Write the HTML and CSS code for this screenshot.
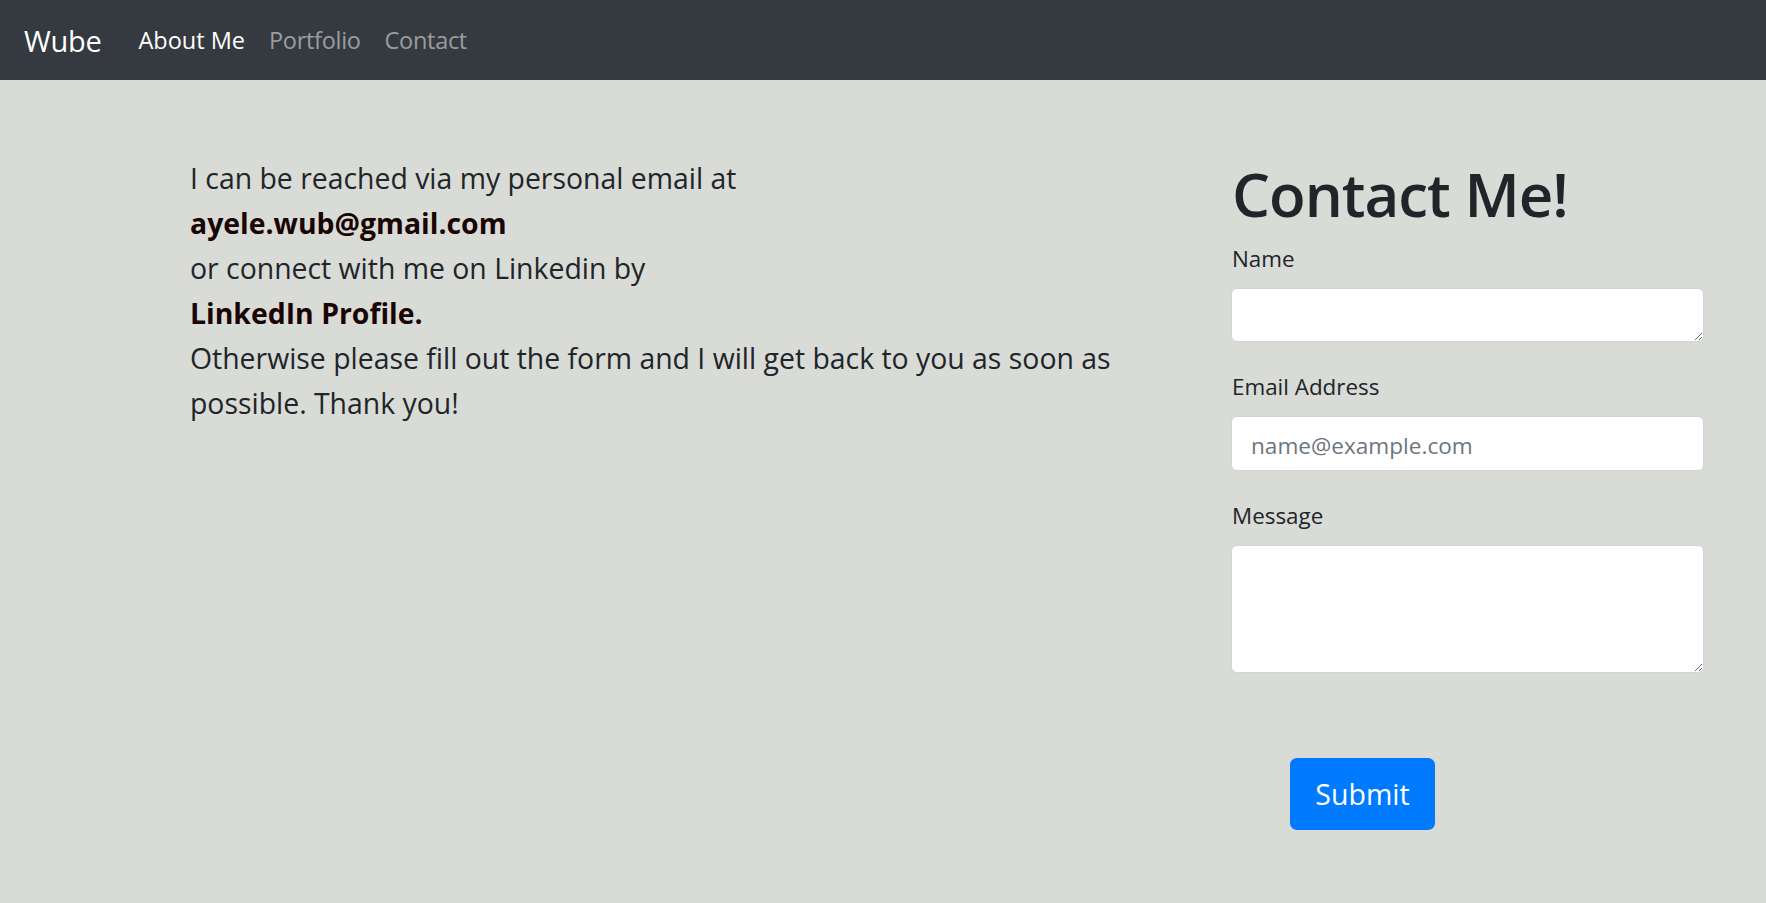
FILE: index.html
```html
<!DOCTYPE html>
<html lang="en">
<head>
<meta charset="utf-8">
<title>Contact - Wube</title>
<link rel="stylesheet" href="styles.css">
</head>
<body>
<nav class="navbar">
  <a class="brand" href="#">Wube</a>
  <ul class="nav">
    <li><a class="nav-link active" href="#">About Me</a></li>
    <li><a class="nav-link" href="#">Portfolio</a></li>
    <li><a class="nav-link" href="#">Contact</a></li>
  </ul>
</nav>
<main class="main">
  <section class="info">
    <p>I can be reached via my personal email at<br>
    <strong>ayele.wub@gmail.com</strong><br>
    or connect with me on Linkedin by<br>
    <strong>LinkedIn Profile.</strong><br>
    Otherwise please fill out the form and I will get back to you as soon as possible. Thank you!</p>
  </section>
  <section class="contact">
    <h1 class="title">Contact Me!</h1>
    <form class="form">
      <div class="group">
        <label class="label" for="name">Name</label>
        <textarea class="control name" id="name"></textarea>
      </div>
      <div class="group">
        <label class="label" for="email">Email Address</label>
        <input class="control email" id="email" type="email" placeholder="name@example.com">
      </div>
      <div class="group">
        <label class="label" for="msg">Message</label>
        <textarea class="control msg" id="msg"></textarea>
      </div>
      <button class="btn" type="button">Submit</button>
    </form>
  </section>
</main>
</body>
</html>
```
FILE: styles.css
```css
* { box-sizing: border-box; }
html, body { margin: 0; padding: 0; }
body {
  background: #d9dbd6;
  color: #212529;
  font-family: "Open Sans", "Noto Sans", sans-serif;
  min-height: 903px;
}
.navbar {
  height: 80px;
  background: #343a40;
  display: flex;
  align-items: center;
  padding: 0 24px;
}
.brand {
  color: #fff;
  text-decoration: none;
  font-size: 29px;
  margin-right: 37px;
  letter-spacing: -0.3px;
}
.nav {
  list-style: none;
  margin: 0;
  padding: 0;
  display: flex;
  gap: 24px;
}
.nav-link {
  color: rgba(255,255,255,0.5);
  text-decoration: none;
  font-size: 23.5px;
  letter-spacing: -0.3px;
}
.nav-link.active { color: #fff; letter-spacing: 0; }
.main {
  display: flex;
  padding-top: 76px;
}
.info {
  width: 1180px;
  padding-left: 190px;
  padding-right: 30px;
}
.info p {
  margin: 0;
  font-size: 28.4px;
  line-height: 45px;
}
.info strong { color: #1a0505; font-weight: 700; }
.contact {
  margin-left: auto;
  margin-right: 62px;
  width: 473px;
}
.title {
  margin: 0 0 10px 1px;
  font-size: 60px;
  font-weight: 560;
  line-height: 76px;
  letter-spacing: -1px;
}
.form { display: flex; flex-direction: column; }
.group { display: flex; flex-direction: column; margin-bottom: 28px; }
.label {
  font-size: 22.4px;
  line-height: 34px;
  margin: 0 0 12px 1px;
}
.control {
  display: block;
  width: 100%;
  background: #fff;
  border: 1px solid #ced4da;
  border-radius: 6px;
  font-family: inherit;
  font-size: 22.6px;
  color: #495057;
  padding: 8px 19px;
}
.control::placeholder { color: #6c757d; }
.name { height: 54px; resize: vertical; }
.email { height: 55px; padding-top: 11px; padding-bottom: 7px; }
.msg { height: 128px; resize: vertical; }
.btn {
  align-self: flex-start;
  margin-left: 59px;
  margin-top: 57px;
  width: 145px;
  height: 72px;
  background: #007bff;
  color: #fff;
  border: none;
  border-radius: 7px;
  font-family: inherit;
  font-size: 28.5px;
}
```
